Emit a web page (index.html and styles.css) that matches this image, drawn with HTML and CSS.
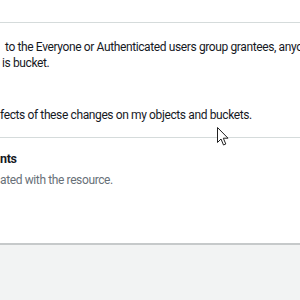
FILE: index.html
```
<!DOCTYPE html>
<html lang="en">
<head>
    <meta charset="UTF-8">
    <meta name="viewport" content="width=device-width, initial-scale=1.0">
    <title>Access control list</title>
    <link rel="stylesheet" href="styles.css">
</head>
<body>

    <!-- Panel de permisos -->
    <div class="panel">
        <div class="panel-header"></div>

        <div class="notice">
            <p class="notice-text first">to the Everyone or Authenticated users group grantees, anyone</p>
            <p class="notice-text second">is bucket.</p>
            <p class="notice-text confirm">fects of these changes on my objects and buckets.</p>
        </div>

        <div class="section">
            <h3 class="section-title">nts</h3>
            <p class="section-desc">ated with the resource.</p>
        </div>
    </div>

    <div class="footer"></div>

    <!-- Cursor del mouse -->
    <svg class="cursor" width="12" height="19" viewBox="0 0 12 19">
        <path d="M0.5 0.5 L0.5 15.5 L4 12 L6.5 18 L8.8 17 L6.3 11.2 L11 11.2 Z" fill="#fff" stroke="#222" stroke-width="1"/>
    </svg>

</body>
</html>
```

FILE: styles.css
```
body {
    font-family: 'Roboto', sans-serif;
    font-size: 12px;
    letter-spacing: -0.38px;
    margin: 0;
    padding: 0;
    height: 300px;
    overflow: hidden;
    background-color: #fff;
    color: #16191f;
    position: relative;
}

.panel {
    background-color: #fff;
    height: 243px;
    overflow: hidden;
}

.panel-header {
    height: 22px;
    border-bottom: 1px solid #d5dbdb;
}

.notice {
    padding-top: 16px;
    border-bottom: 1px solid #d5dbdb;
    padding-bottom: 14px;
}

.notice-text {
    margin: 0;
    line-height: 16px;
    white-space: nowrap;
    overflow: hidden;
}

.first {
    padding-left: 5px;
}

.second {
    padding-left: 2px;
}

.confirm {
    margin-top: 36px;
}

.section {
    padding-top: 12px;
}

.section-title {
    margin: 0;
    font-size: 12.5px;
    font-weight: bold;
    line-height: 18px;
}

.section-desc {
    margin: 4px 0 0;
    color: #687078;
    line-height: 16px;
}

.footer {
    border-top: 2px solid #c6c9ca;
    background-color: #f2f3f3;
    height: 60px;
}

.cursor {
    position: absolute;
    left: 217px;
    top: 127px;
}
```
